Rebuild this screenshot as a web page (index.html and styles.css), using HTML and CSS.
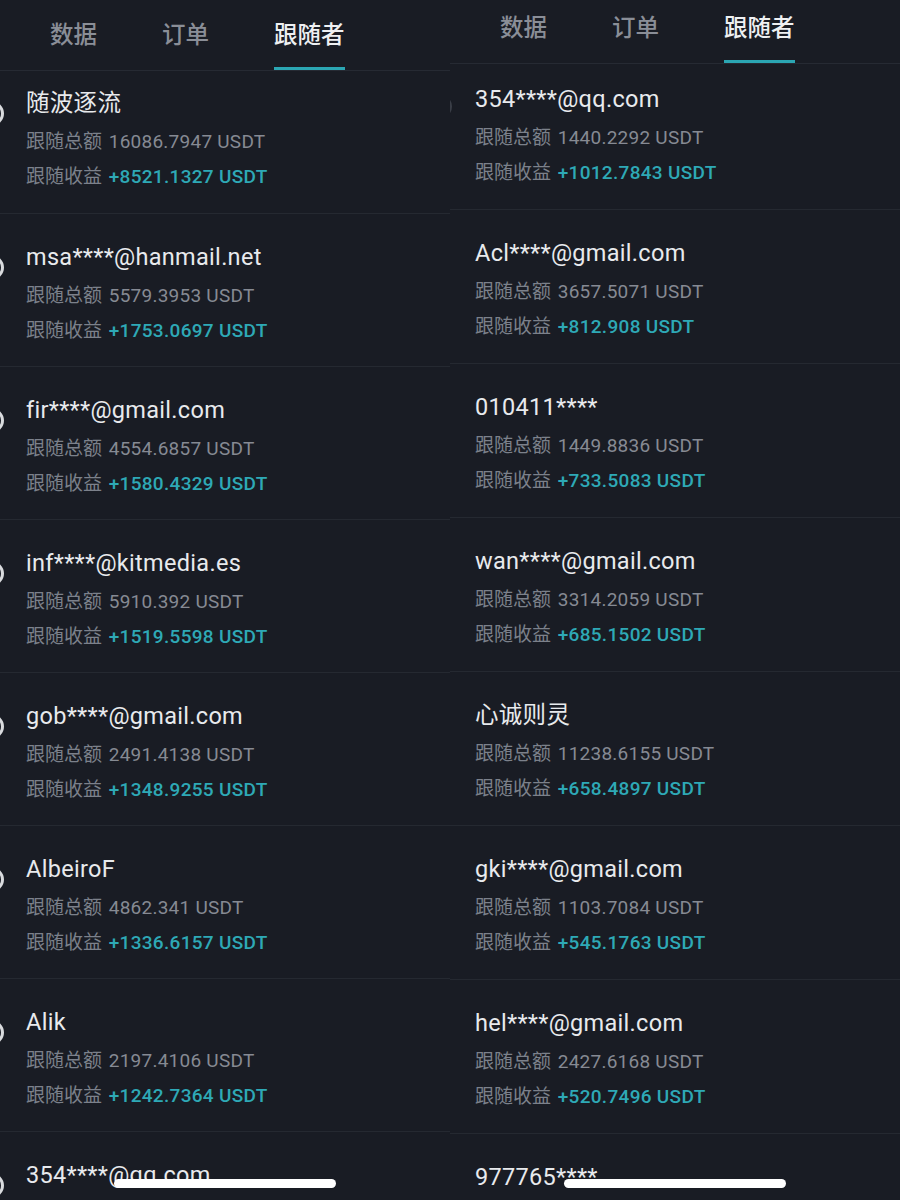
FILE: index.html
```html
<!DOCTYPE html>
<html lang="zh">
<head>
<meta charset="utf-8">
<title>跟随者</title>
<link rel="stylesheet" href="styles.css">
</head>
<body>
<div class="screen">
  <section class="panel panel-left">
    <nav class="tabs">
      <span class="tab">数据</span>
      <span class="tab">订单</span>
      <span class="tab active">跟随者</span>
    </nav>
    <ul class="list">
      <li class="row"><span class="avatar"></span><div class="name">随波逐流</div><div class="line">跟随总额 <span class="amt">16086.7947 USDT</span></div><div class="line">跟随收益 <span class="profit">+8521.1327 USDT</span></div></li>
      <li class="row"><span class="avatar"></span><div class="name">msa****@hanmail.net</div><div class="line">跟随总额 <span class="amt">5579.3953 USDT</span></div><div class="line">跟随收益 <span class="profit">+1753.0697 USDT</span></div></li>
      <li class="row"><span class="avatar"></span><div class="name">fir****@gmail.com</div><div class="line">跟随总额 <span class="amt">4554.6857 USDT</span></div><div class="line">跟随收益 <span class="profit">+1580.4329 USDT</span></div></li>
      <li class="row"><span class="avatar"></span><div class="name">inf****@kitmedia.es</div><div class="line">跟随总额 <span class="amt">5910.392 USDT</span></div><div class="line">跟随收益 <span class="profit">+1519.5598 USDT</span></div></li>
      <li class="row"><span class="avatar"></span><div class="name">gob****@gmail.com</div><div class="line">跟随总额 <span class="amt">2491.4138 USDT</span></div><div class="line">跟随收益 <span class="profit">+1348.9255 USDT</span></div></li>
      <li class="row"><span class="avatar"></span><div class="name">AlbeiroF</div><div class="line">跟随总额 <span class="amt">4862.341 USDT</span></div><div class="line">跟随收益 <span class="profit">+1336.6157 USDT</span></div></li>
      <li class="row"><span class="avatar"></span><div class="name">Alik</div><div class="line">跟随总额 <span class="amt">2197.4106 USDT</span></div><div class="line">跟随收益 <span class="profit">+1242.7364 USDT</span></div></li>
      <li class="row"><span class="avatar"></span><div class="name">354****@qq.com</div></li>
    </ul>
    <div class="home-bar"></div>
  </section>
  <section class="panel panel-right">
    <nav class="tabs">
      <span class="tab">数据</span>
      <span class="tab">订单</span>
      <span class="tab active">跟随者</span>
    </nav>
    <ul class="list">
      <li class="row"><span class="avatar dim"></span><div class="name">354****@qq.com</div><div class="line">跟随总额 <span class="amt">1440.2292 USDT</span></div><div class="line">跟随收益 <span class="profit">+1012.7843 USDT</span></div></li>
      <li class="row"><div class="name">Acl****@gmail.com</div><div class="line">跟随总额 <span class="amt">3657.5071 USDT</span></div><div class="line">跟随收益 <span class="profit">+812.908 USDT</span></div></li>
      <li class="row"><div class="name">010411****</div><div class="line">跟随总额 <span class="amt">1449.8836 USDT</span></div><div class="line">跟随收益 <span class="profit">+733.5083 USDT</span></div></li>
      <li class="row"><div class="name">wan****@gmail.com</div><div class="line">跟随总额 <span class="amt">3314.2059 USDT</span></div><div class="line">跟随收益 <span class="profit">+685.1502 USDT</span></div></li>
      <li class="row"><div class="name">心诚则灵</div><div class="line">跟随总额 <span class="amt">11238.6155 USDT</span></div><div class="line">跟随收益 <span class="profit">+658.4897 USDT</span></div></li>
      <li class="row"><div class="name">gki****@gmail.com</div><div class="line">跟随总额 <span class="amt">1103.7084 USDT</span></div><div class="line">跟随收益 <span class="profit">+545.1763 USDT</span></div></li>
      <li class="row"><div class="name">hel****@gmail.com</div><div class="line">跟随总额 <span class="amt">2427.6168 USDT</span></div><div class="line">跟随收益 <span class="profit">+520.7496 USDT</span></div></li>
      <li class="row"><div class="name">977765****</div></li>
    </ul>
    <div class="home-bar"></div>
  </section>
</div>
</body>
</html>
```
FILE: styles.css
```css
* { box-sizing: border-box; }
html, body {
  margin: 0;
  padding: 0;
  background: #191c24;
  height: 1200px;
  overflow: hidden;
}
body {
  font-family: Roboto, "Noto Sans CJK SC", sans-serif;
  color: #e6e8eb;
}
.screen {
  display: flex;
  width: 900px;
  height: 1200px;
}
.panel {
  position: relative;
  width: 450px;
  height: 1200px;
  overflow: hidden;
  background: #191c24;
}
.tabs {
  display: flex;
  gap: 65px;
  padding-left: 50px;
  border-bottom: 1px solid #262a33;
}
.tab {
  font-size: 23.5px;
  line-height: 32px;
  padding-top: 19px;
  padding-bottom: 16px;
  border-bottom: 3px solid transparent;
  color: #8a8e97;
  font-weight: 500;
}
.tab.active {
  color: #eef0f2;
  border-bottom-color: #2ba6b3;
}
.panel-right .tab {
  padding-top: 12px;
}
.list {
  list-style: none;
  margin: 0;
  padding: 0;
}
.row {
  position: relative;
  padding: 28px 0 18px 26px;
  border-bottom: 1px solid #252931;
}
.row:first-child {
  padding-top: 17px;
  padding-bottom: 19px;
}
.panel-right .row {
  padding: 28px 0 19px 25px;
}
.panel-right .row:first-child {
  padding-top: 20px;
}
.name {
  font-size: 23.5px;
  line-height: 30px;
  color: #e8eaed;
  margin-bottom: 6px;
  letter-spacing: 0.3px;
}
.line {
  font-size: 19px;
  line-height: 35px;
  color: #7c818b;
}
.amt {
  color: #868a93;
  margin-left: 2px;
  letter-spacing: 0.25px;
}
.profit {
  color: #2ea9b6;
  font-weight: 500;
  margin-left: 2px;
  letter-spacing: 0.3px;
}
.avatar {
  position: absolute;
  left: -21px;
  width: 25px;
  height: 25px;
  border-radius: 50%;
  border: 3px solid #d9dbde;
  top: 41px;
}
.row:first-child .avatar {
  top: 30px;
}
.avatar.dim {
  border-color: #3a3e47;
  border-width: 2px;
  left: -23px;
}
.home-bar {
  position: absolute;
  left: 114px;
  top: 1179px;
  width: 222px;
  height: 9px;
  border-radius: 5px;
  background: #ffffff;
}
```
